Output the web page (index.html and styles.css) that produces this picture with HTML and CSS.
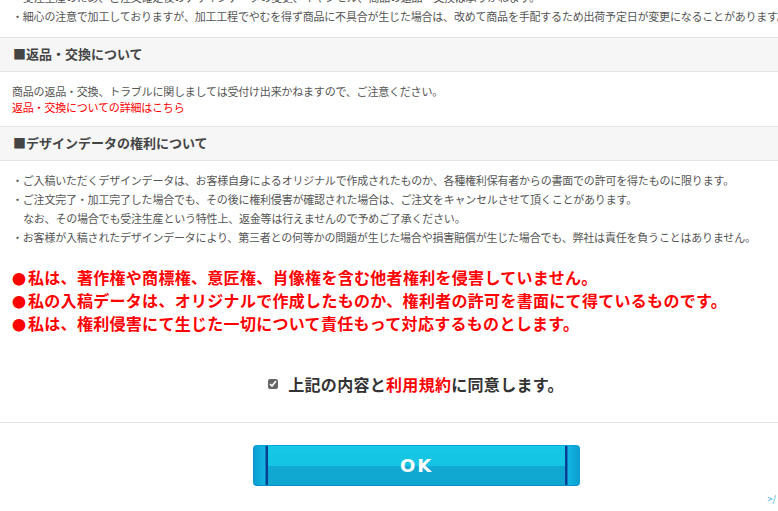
FILE: index.html
```html
<!DOCTYPE html>
<html lang="ja">
<head>
    <meta charset="UTF-8" />
    <title>ご注文内容の確認</title>
    <link rel="stylesheet" href="styles.css">
</head>
<body>
    <div id="main">
        <div class="notes top">
            <p>・受注生産のため、ご注文確定後のデザインデータの変更、キャンセル、商品の返品・交換は承りかねます。</p>
            <p>・細心の注意で加工しておりますが、加工工程でやむを得ず商品に不具合が生じた場合は、改めて商品を手配するため出荷予定日が変更になることがあります。</p>
        </div>

        <h2 class="sec-title">■返品・交換について</h2>
        <div class="sec-body">
            <p>商品の返品・交換、トラブルに関しましては受付け出来かねますので、ご注意ください。</p>
            <p><a href="#" class="red">返品・交換についての詳細はこちら</a></p>
        </div>

        <h2 class="sec-title">■デザインデータの権利について</h2>
        <div class="notes rights">
            <p>・ご入稿いただくデザインデータは、お客様自身によるオリジナルで作成されたものか、各種権利保有者からの書面での許可を得たものに限ります。</p>
            <p>・ご注文完了・加工完了した場合でも、その後に権利侵害が確認された場合は、ご注文をキャンセルさせて頂くことがあります。</p>
            <p class="indent">なお、その場合でも受注生産という特性上、返金等は行えませんので予めご了承ください。</p>
            <p>・お客様が入稿されたデザインデータにより、第三者との何等かの問題が生じた場合や損害賠償が生じた場合でも、弊社は責任を負うことはありません。</p>
        </div>

        <ul class="pledge">
            <li><span class="dot">●</span>私は、著作権や商標権、意匠権、肖像権を含む他者権利を侵害していません。</li>
            <li><span class="dot">●</span>私の入稿データは、オリジナルで作成したものか、権利者の許可を書面にて得ているものです。</li>
            <li><span class="dot">●</span>私は、権利侵害にて生じた一切について責任もって対応するものとします。</li>
        </ul>

        <label class="agree">
            <input type="checkbox" checked>
            <span>上記の内容と<a href="#" class="red">利用規約</a>に同意します。</span>
        </label>

        <div class="actions">
            <button type="button" class="btn-ok">OK</button>
            <a href="#" class="pagetop">&gt;/</a>
        </div>
    </div>
</body>
</html>
```

FILE: styles.css
```css
*{
    margin: 0;
    padding: 0;
    border: none;
    box-sizing: border-box;
}
html,body{
    width: 100%;
    height: 100%;
    overflow: hidden;
}
body{
    font-family: "Noto Sans CJK JP", "Noto Sans", sans-serif;
    color: #555;
    font-size: 11px;
    background-color: #fff;
}
a{
    text-decoration: none;
}
.red{
    color: #f00;
}

#main{
    margin-top: -12px;
}

.notes{
    padding: 0 12px;
    line-height: 18.7px;
    white-space: nowrap;
    letter-spacing: -0.2px;
}
.notes.top{
    padding-bottom: 12px;
}
.notes.rights{
    padding-top: 10px;
    padding-bottom: 20px;
}
.notes .indent{
    padding-left: 11px;
}

.sec-title{
    background-color: #f6f6f6;
    border-top: 1px solid #e4e4e4;
    border-bottom: 1px solid #e4e4e4;
    height: 35px;
    line-height: 32px;
    padding-left: 13px;
    font-size: 13px;
    font-weight: bold;
    color: #444;
}

.sec-body{
    padding: 11px 12px 11px;
    line-height: 16px;
    letter-spacing: -0.2px;
}

.pledge{
    list-style: none;
    padding: 0 12px;
    font-size: 16px;
    line-height: 22px;
    font-weight: bold;
    color: #f00;
    white-space: nowrap;
    letter-spacing: 0.3px;
}
.pledge .dot{
    display: inline-block;
    width: 16px;
    font-size: 14px;
}

.agree{
    display: flex;
    justify-content: center;
    align-items: flex-start;
    gap: 10px;
    padding: 37px 0 0 54px;
    height: 88px;
    font-size: 16px;
    font-weight: bold;
    color: #333;
    border-bottom: 1px solid #e6e6e6;
    letter-spacing: 0.3px;
}
.agree input{
    width: 10px;
    height: 10px;
    margin-top: 7px;
    accent-color: #666;
}
.agree span{
    line-height: 24px;
}

.actions{
    position: relative;
    padding-top: 22px;
    height: 100px;
}
.btn-ok{
    display: block;
    margin: 0 0 0 253px;
    width: 327px;
    height: 41px;
    border-radius: 4px;
    color: #fff;
    font-family: "DejaVu Sans", "Noto Sans", sans-serif;
    font-size: 18px;
    font-weight: bold;
    letter-spacing: 2px;
    cursor: pointer;
    background:
        linear-gradient(to right, #0b9ccf 0, #13b6e0 12px, #093f93 13px, #093f93 15px, transparent 15px),
        linear-gradient(to left, #0b9ccf 0, #13b6e0 12px, #093f93 13px, #093f93 15px, transparent 15px),
        linear-gradient(to bottom, #15c9e6 0, #15c4e3 50%, #10a9d2 50%, #0fa6d0 100%);
    box-shadow: inset 0 1px 0 #0aa3d6, inset 0 -1px 0 #0a8ec8;
}
.pagetop{
    position: absolute;
    right: 2px;
    top: 69px;
    font-size: 9px;
    color: #29a3d9;
}
```
